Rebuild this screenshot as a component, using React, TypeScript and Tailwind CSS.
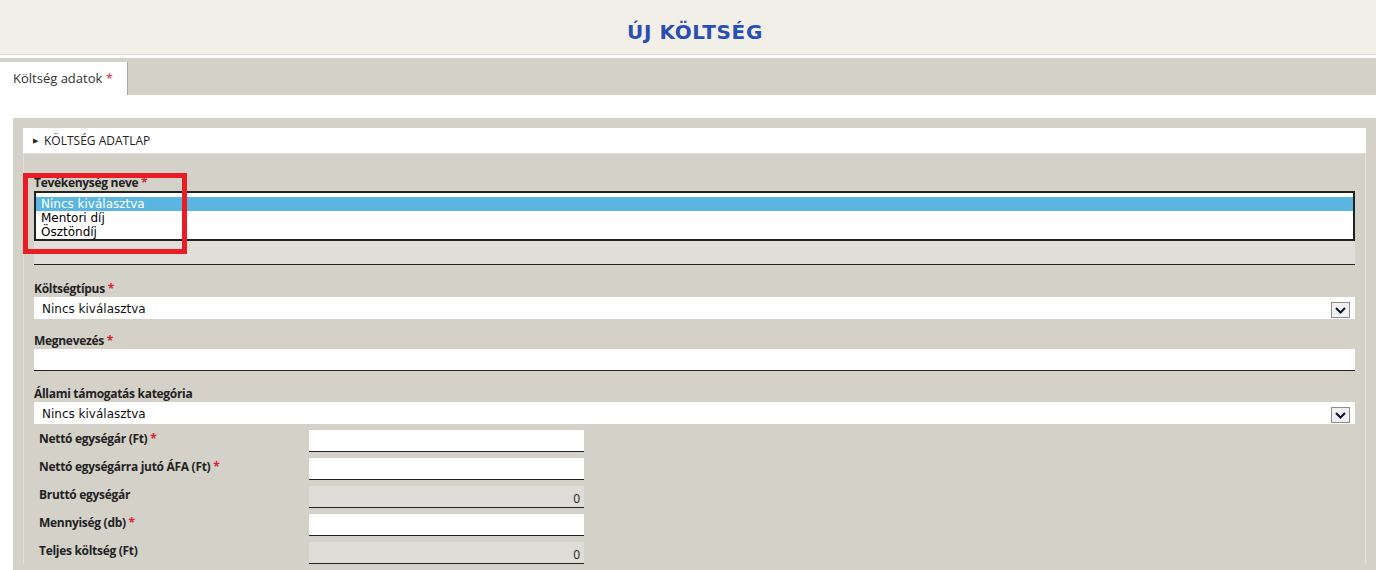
import React from "react";

const Star = () => <span className="text-[#d9232e]"> *</span>;

function Chevron() {
  return (
    <div className="w-[19px] h-[16px] border border-[#8c8c8c] bg-[#f0f0f0] flex items-center justify-center">
      <svg width="11" height="7" viewBox="0 0 11 7" fill="none">
        <polyline points="1,1 5.5,5.5 10,1" stroke="#0b1633" strokeWidth="2" />
      </svg>
    </div>
  );
}

function Label({ children }: { children: React.ReactNode }) {
  return (
    <div className="h-[16px] leading-[16px] text-[12px] font-bold text-[#222] tracking-[-0.3px]">
      {children}
    </div>
  );
}

function SelectBox({ value }: { value: string }) {
  return (
    <div className="h-[22px] bg-white flex justify-between items-end pr-[5px] pb-[1px]">
      <span className="font-['DejaVu_Sans'] text-[12px] leading-[16px] pl-[8px] text-[#111] self-center pt-[3px]">
        {value}
      </span>
      <Chevron />
    </div>
  );
}

function Row({ label, req, value, readOnly }: { label: string; req?: boolean; value?: string; readOnly?: boolean }) {
  return (
    <div className="flex h-[22px]">
      <div className="w-[275px] pl-[5px] text-[12px] font-bold text-[#222] tracking-[-0.3px] leading-[18px]">
        {label}
        {req && <Star />}
      </div>
      <div
        className={`w-[275px] h-[22px] border-b border-[#222] text-right pr-[4px] pt-[5px] text-[12px] leading-[16px] text-[#222] ${
          readOnly ? "bg-[#dddcd6]" : "bg-white"
        }`}
      >
        {value}
      </div>
    </div>
  );
}

export default function App() {
  return (
    <div className="min-h-screen bg-white font-['Open_Sans',sans-serif] overflow-hidden">
      <div className="h-[55px] bg-[#f2efe8] border-b border-[#d9d6cf] flex items-center justify-center">
        <h1 className="font-['DejaVu_Sans',sans-serif] font-bold text-[20px] text-[#2a4fb3] tracking-[0.6px] pt-[10px] pl-[14px]">
          ÚJ KÖLTSÉG
        </h1>
      </div>
      <div className="mt-[3px] h-[37px] bg-[#d4d1c9] pt-[4px] flex">
        <div className="w-[128px] h-[33px] bg-white border-r border-[#a9a6a0] pl-[13px] pt-[7px] text-[13px] text-[#333] leading-[18px]">
          Költség adatok<Star />
        </div>
      </div>
      <div className="h-[23px]" />
      <div className="ml-[13px] bg-[#d4d1c9] pt-[10px] px-[10px] pb-[20px]">
        <div className="h-[25px] bg-white flex items-center pl-[10px] gap-[6px] text-[12px] text-[#222]">
          <span className="text-[7px] leading-none">▶</span>
          <span>KÖLTSÉG ADATLAP</span>
        </div>
        <div className="border-l border-r border-t border-[#e3e1db] px-[10px] pt-[21px]">
          <div className="relative">
            <div className="absolute left-[-11px] top-[-2px] w-[164px] h-[81px] border-[5px] border-[#ea1c24] z-10" />
            <Label>
              Tevékenység neve<Star />
            </Label>
            <div className="h-[50px] border-2 border-[#222] bg-white pt-[4px] font-['DejaVu_Sans'] text-[12px]">
              <div className="h-[14px] leading-[14px] pl-[5px] bg-[#5bb5e1] text-white">Nincs kiválasztva</div>
              <div className="h-[14px] leading-[14px] pl-[5px] text-black">Mentori díj</div>
              <div className="h-[14px] leading-[14px] pl-[5px] text-black">Ösztöndíj</div>
            </div>
            <div className="h-[24px] bg-[#dfded8] border-b border-[#222]" />
          </div>

          <div className="mt-[16px]">
            <Label>
              Költségtípus<Star />
            </Label>
            <SelectBox value="Nincs kiválasztva" />
          </div>

          <div className="mt-[14px]">
            <Label>
              Megnevezés<Star />
            </Label>
            <div className="h-[22px] bg-white border-b border-[#222]" />
          </div>

          <div className="mt-[15px]">
            <Label>Állami támogatás kategória</Label>
            <SelectBox value="Nincs kiválasztva" />
          </div>

          <div className="mt-[6px] flex flex-col gap-[6px]">
            <Row label="Nettó egységár (Ft)" req />
            <Row label="Nettó egységárra jutó ÁFA (Ft)" req />
            <Row label="Bruttó egységár" value="0" readOnly />
            <Row label="Mennyiség (db)" req />
            <Row label="Teljes költség (Ft)" value="0" readOnly />
          </div>
        </div>
      </div>
    </div>
  );
}
